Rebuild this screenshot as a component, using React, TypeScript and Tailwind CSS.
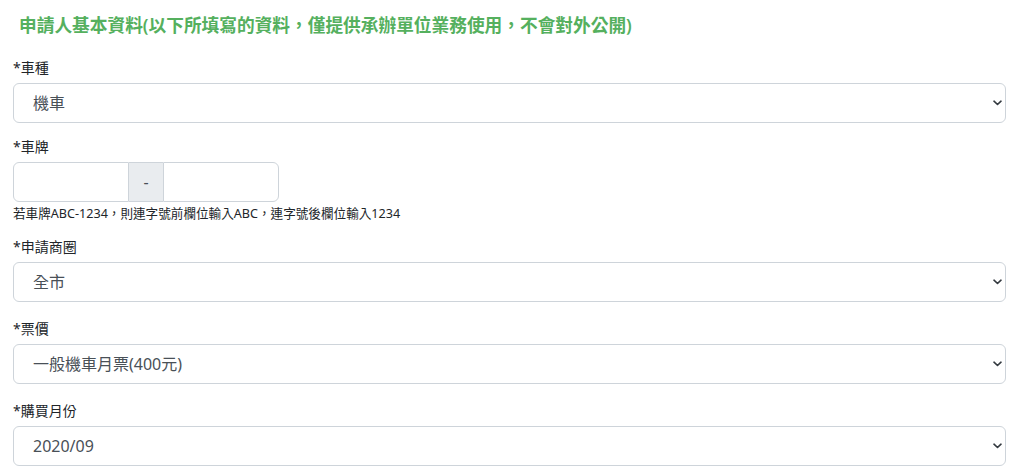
import React from 'react';

const font = { fontFamily: '"Noto Sans", "Noto Sans CJK TC", sans-serif' };

const Chevron = () => (
  <svg
    className="pointer-events-none absolute right-[4px] top-1/2 -translate-y-1/2"
    width="9"
    height="6"
    viewBox="0 0 9 6"
    fill="none"
  >
    <path d="M1 1.2l3.5 3.3L8 1.2" stroke="#343a40" strokeWidth="1.6" strokeLinecap="round" strokeLinejoin="round" />
  </svg>
);

const SelectField: React.FC<{ value: string }> = ({ value }) => (
  <div className="relative">
    <select
      defaultValue={value}
      className="block h-[40px] w-full appearance-none rounded-[6px] border border-[#ced4da] bg-white pl-[19px] pr-8 text-[16px] text-[#495057] outline-none"
      style={font}
    >
      <option>{value}</option>
    </select>
    <Chevron />
  </div>
);

const Label: React.FC<{ text: string }> = ({ text }) => (
  <label className="block h-[20px] text-[14px] leading-[20px] text-[#212529] mb-[5px]">*{text}</label>
);

export default function App() {
  return (
    <div className="min-h-[474px] w-[1024px] bg-white px-[13px] pt-[12px] pr-[18px]" style={font}>
      <h2 className="h-[26px] pl-[6px] text-[17.7px] font-semibold leading-[26px] text-[#55b05e]">
        申請人基本資料(以下所填寫的資料，僅提供承辦單位業務使用，不會對外公開)
      </h2>

      <div className="mt-[20px] mb-[14px]">
        <Label text="車種" />
        <SelectField value="機車" />
      </div>

      <div className="mb-[15px]">
        <Label text="車牌" />
        <div className="flex h-[40px] w-[266px]">
          <input className="w-[116px] rounded-l-[6px] border border-[#ced4da] bg-white outline-none" />
          <span className="flex w-[34px] items-center justify-center border-y border-[#ced4da] bg-[#e9ecef] text-[16px] text-[#495057]">
            -
          </span>
          <input className="w-[116px] rounded-r-[6px] border border-[#ced4da] bg-white outline-none" />
        </div>
        <p className="mt-[4px] text-[12.6px] leading-[16px] text-[#212529]">
          若車牌ABC-1234，則連字號前欄位輸入ABC，連字號後欄位輸入1234
        </p>
      </div>

      <div className="mb-[17px]">
        <Label text="申請商圈" />
        <SelectField value="全市" />
      </div>

      <div className="mb-[17px]">
        <Label text="票價" />
        <SelectField value="一般機車月票(400元)" />
      </div>

      <div>
        <Label text="購買月份" />
        <SelectField value="2020/09" />
      </div>
    </div>
  );
}
